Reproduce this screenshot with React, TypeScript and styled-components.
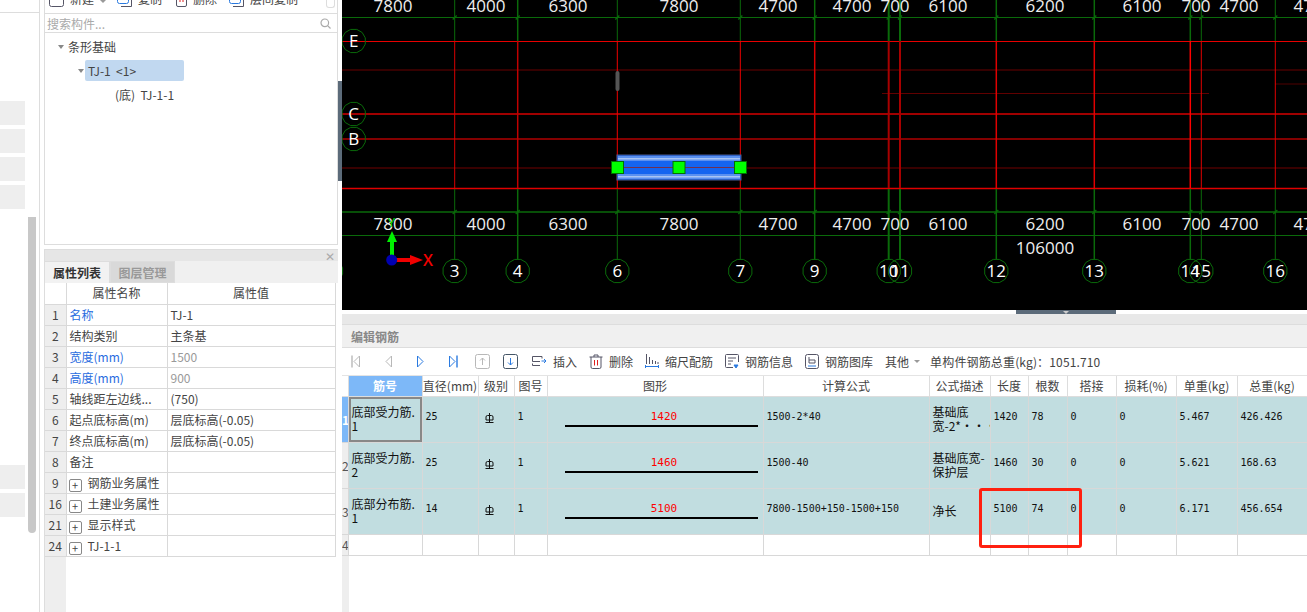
import styled, { createGlobalStyle } from "styled-components";

const GlobalStyle = createGlobalStyle`
  html, body {
    margin: 0;
    padding: 0;
    background: #fff;
  }
  * {
    box-sizing: border-box;
  }
`;

const Page = styled.div`
  display: flex;
  width: 1307px;
  height: 612px;
  overflow: hidden;
  background: #fff;
  color: #444;
  font-family: "Noto Sans CJK SC", "Noto Sans", sans-serif;
  font-size: 12px;
`;

/* ---------- left strip ---------- */

const Strip = styled.div`
  width: 40px;
  flex: none;
  border-right: 1px solid #ddd;
`;

const StripHead = styled.div`
  height: 13px;
  border-bottom: 1px solid #ddd;
`;

const StripBody = styled.div`
  display: flex;
  gap: 3px;
`;

const StripItems = styled.div`
  width: 25px;
  display: flex;
  flex-direction: column;
  gap: 4px;
  padding-top: 88px;
`;

const StripItem = styled.div<{ $gapBefore?: number }>`
  height: 24px;
  background: #eee;
  margin-top: ${(p) => p.$gapBefore ?? 0}px;
`;

const StripScroll = styled.div`
  width: 8px;
  height: 316px;
  margin-top: 204px;
  border-radius: 0 0 4px 4px;
  background: #c8c8c8;
`;

/* ---------- side panel ---------- */

const Side = styled.div`
  width: 302px;
  flex: none;
  display: flex;
  padding-left: 4px;
`;

const SideColumn = styled.div`
  width: 294px;
  display: flex;
  flex-direction: column;
  gap: 4px;
`;

const Rail = styled.div`
  width: 4px;
  height: 100px;
  margin-top: 81px;
  background: #5c6b7a;
`;

const TreeCard = styled.div`
  height: 245px;
  flex: none;
  border: 1px solid #ddd;
  border-top: none;
`;

const TreeToolbar = styled.div`
  height: 14px;
  display: flex;
  align-items: flex-end;
  overflow: hidden;
  border-bottom: 1px solid #ddd;
  padding: 0 2px 6px 4px;
`;

const TreeTool = styled.div<{ $ml?: number }>`
  display: flex;
  flex: none;
  align-items: flex-end;
  gap: 6px;
  height: 16px;
  line-height: 16px;
  margin-left: ${(p) => p.$ml ?? 0}px;
  color: #444;
`;

const ToolCaret = styled.span`
  margin-bottom: 4px;
  border-left: 3px solid transparent;
  border-right: 3px solid transparent;
  border-top: 3px solid #999;
`;

const MoreButton = styled.div`
  flex: none;
  width: 9px;
  height: 9px;
  margin: 0 0 -1px auto;
  border: 1px solid #ddd;
  border-top: none;
  border-radius: 0 0 3px 3px;
`;

const SearchRow = styled.div`
  height: 19px;
  display: flex;
  align-items: center;
  justify-content: space-between;
  padding: 0 6px 0 2px;
  border-bottom: 1px solid #ddd;
  color: #aaa;
`;

const Tree = styled.div`
  display: flex;
  flex-direction: column;
`;

const TreeRow = styled.div<{ $indent: number; $selected?: boolean }>`
  position: relative;
  display: flex;
  align-items: center;
  height: 21px;
  margin-top: 3px;
  margin-left: ${(p) => p.$indent}px;
  width: ${(p) => (p.$selected ? "99px" : "auto")};
  padding-left: 3px;
  border-radius: 2px;
  background: ${(p) => (p.$selected ? "#c1d8f0" : "transparent")};
  white-space: pre;
`;

const Caret = styled.span`
  position: absolute;
  left: -7px;
  top: 9px;
  border-left: 3.5px solid transparent;
  border-right: 3.5px solid transparent;
  border-top: 4px solid #888;
`;

const PropCard = styled.div`
  flex: 1;
  min-height: 0;
  display: flex;
  flex-direction: column;
  border-left: 1px solid #ddd;
`;

const PropHeader = styled.div`
  height: 12px;
  flex: none;
  display: flex;
  justify-content: flex-end;
  align-items: center;
  padding-right: 3px;
  background: #e6e6e6;
  border-top: 1px solid #ddd;
  color: #aaa;
`;

const TabBar = styled.div`
  height: 22px;
  flex: none;
  display: flex;
  background: #f0f0f0;
`;

const Tab = styled.div<{ $active?: boolean }>`
  width: 65px;
  display: flex;
  align-items: center;
  justify-content: center;
  border: 1px solid #ddd;
  border-left: ${(p) => (p.$active ? "none" : "1px solid #ddd")};
  border-bottom: ${(p) => (p.$active ? "none" : "1px solid #ddd")};
  background: ${(p) => (p.$active ? "#f2f2f2" : "#d9d9d9")};
  color: ${(p) => (p.$active ? "#333" : "#999")};
  font-weight: 700;
`;

const PropTable = styled.table`
  width: 290px;
  flex: none;
  table-layout: fixed;
  border-collapse: collapse;
`;

const PropCell = styled.td<{ $tone?: "blue" | "muted" }>`
  height: 21px;
  padding: 0 0 0 3px;
  border: 1px solid #d9d9d9;
  border-top: none;
  border-left: none;
  line-height: 20px;
  white-space: nowrap;
  overflow: hidden;
  color: ${(p) =>
    p.$tone === "blue" ? "#2a6de0" : p.$tone === "muted" ? "#999" : "#444"};
`;

const PropHeadCell = styled(PropCell)`
  padding: 0;
  font-weight: 400;
  text-align: center;
`;

const PropNum = styled(PropCell)`
  padding: 0;
  background: #eee;
  text-align: center;
`;

const PropCorner = styled(PropNum)`
  background: #fff;
`;

const PropGutter = styled.div`
  width: 21px;
  flex: 1;
  background: #eee;
`;

const Expand = styled.span`
  display: inline-flex;
  align-items: center;
  justify-content: center;
  width: 13px;
  height: 13px;
  margin: 0 6px 0 -1px;
  border: 1px solid #888;
  border-radius: 2px;
  font-size: 11px;
  line-height: 1;
  vertical-align: -2px;
`;

const SizedCol = styled.col<{ $w: number }>`
  width: ${(p) => p.$w}px;
`;

/* ---------- main ---------- */

const Main = styled.div`
  flex: 1;
  min-width: 0;
  display: flex;
  flex-direction: column;
`;

const Canvas = styled.svg`
  display: block;
  width: 965px;
  height: 310px;
  flex: none;
  background: #000;
`;

const SplitBar = styled.div`
  height: 4px;
  flex: none;
  display: flex;
  justify-content: flex-end;
  padding-right: 191px;
  background: #fff;
`;

const SplitHandle = styled.div`
  width: 100px;
  display: flex;
  justify-content: center;
  align-items: flex-end;
  background: #5c6b7a;
`;

const SplitArrow = styled.span`
  border-left: 3px solid transparent;
  border-right: 3px solid transparent;
  border-top: 3px solid #ccc;
`;

const PanelTitleGap = styled.div`
  height: 11px;
  flex: none;
  background: #e8e8e8;
  border-bottom: 1px solid #ddd;
`;

const PanelTitle = styled.div`
  height: 23px;
  flex: none;
  display: flex;
  align-items: center;
  padding-left: 9px;
  background: #f0f0f0;
  border-bottom: 1px solid #ddd;
  color: #888;
  font-weight: 700;
`;

const Toolbar = styled.div`
  height: 28px;
  flex: none;
  display: flex;
  align-items: center;
  border-bottom: 1px solid #e4e4e4;
  white-space: nowrap;
`;

const NavIcon = styled.div<{ $w: number }>`
  width: ${(p) => p.$w}px;
  flex: none;
  display: flex;
  justify-content: center;
  padding-right: 3px;
`;

const Action = styled.div<{ $ml: number }>`
  display: flex;
  flex: none;
  align-items: center;
  gap: 6px;
  margin-left: ${(p) => p.$ml}px;
`;

const MenuCaret = styled.span`
  margin-left: 5px;
  border-left: 3px solid transparent;
  border-right: 3px solid transparent;
  border-top: 3px solid #999;
`;

const Summary = styled.div`
  margin-left: 10px;
  flex: none;
  letter-spacing: 0.15px;
`;

const TableWrap = styled.div`
  position: relative;
  flex: 1;
  min-height: 0;
  display: flex;
  flex-direction: column;
`;

const Rebars = styled.table`
  width: 965px;
  flex: none;
  table-layout: fixed;
  border-collapse: collapse;
`;

const HeadCell = styled.th<{ $accent?: boolean }>`
  height: 20px;
  padding: 0;
  border: 1px solid #ddd;
  border-top: none;
  border-left: none;
  font-weight: ${(p) => (p.$accent ? 700 : 400)};
  color: ${(p) => (p.$accent ? "#fff" : "#444")};
  background: ${(p) => (p.$accent ? "#7db8f8" : "#fff")};
  white-space: nowrap;
  overflow: hidden;
`;

const Cell = styled.td<{ $filled: boolean; $focused?: boolean }>`
  height: 46px;
  padding: 0 0 0 3px;
  border: 1px solid #d8d8d8;
  border-top: none;
  border-left: none;
  background: ${(p) => (p.$filled ? "#c1dde0" : "#fff")};
  box-shadow: ${(p) => (p.$focused ? "inset 0 0 0 2px #888" : "none")};
  color: #111;
  line-height: 14px;
  overflow: hidden;
`;

const BlankCell = styled(Cell)`
  height: 21px;
`;

const RowNum = styled.td<{ $active?: boolean }>`
  padding: 0;
  border: 1px solid #d8d8d8;
  border-top: none;
  border-left: none;
  background: ${(p) => (p.$active ? "#7db8f8" : "#eee")};
  color: ${(p) => (p.$active ? "#fff" : "#555")};
  font-size: 12px;
  font-weight: ${(p) => (p.$active ? 700 : 400)};
  overflow: hidden;
  text-align: center;
`;

const Mono = styled.span`
  display: block;
  margin-bottom: 4px;
  font-family: "DejaVu Sans Mono", monospace;
  font-size: 10px;
  line-height: 12px;
  white-space: nowrap;
`;

const Shape = styled.div`
  display: flex;
  flex-direction: column;
  align-items: center;
  gap: 2px;
  padding-top: 2px;
  margin: 0 0 4px 10px;
`;

const ShapeLength = styled.span`
  padding-left: 5px;
  font-family: "DejaVu Sans Mono", monospace;
  font-size: 11px;
  line-height: 13px;
  color: #f00;
`;

const ShapeBar = styled.div`
  width: 193px;
  height: 2px;
  background: #000;
`;

const TableGutter = styled.div`
  width: 7px;
  flex: 1;
  background: #eee;
`;

const RedFrame = styled.div`
  position: absolute;
  left: 637px;
  top: 112px;
  width: 103px;
  height: 60px;
  border: 3px solid #ff2010;
  border-radius: 3px;
  pointer-events: none;
`;

/* ---------- drawing data ---------- */

interface Axis {
  x: number;
  label: string;
  stroke?: number;
  red?: string;
}

const AXES: Axis[] = [
  { x: 454.7, label: "3", red: "#d80000" },
  { x: 517.7, label: "4", stroke: 1.5, red: "#c00000" },
  { x: 617.3, label: "6", red: "#f00000" },
  { x: 740.3, label: "7", red: "#f00000" },
  { x: 814.7, label: "9", stroke: 1.5, red: "#d80000" },
  { x: 888.7, label: "10", stroke: 2, red: "#a80000" },
  { x: 900, label: "11", stroke: 2, red: "#a80000" },
  { x: 996.3, label: "12", stroke: 1.5, red: "#e00000" },
  { x: 1094.3, label: "13", stroke: 1.5, red: "#e00000" },
  { x: 1190.3, label: "14", stroke: 1.5, red: "#ff0000" },
  { x: 1201.3, label: "15", red: "#e00000" },
  { x: 1275.3, label: "16", red: "#e00000" },
];

const DIMENSIONS: [number, string][] = [
  [393, "7800"],
  [486, "4000"],
  [568, "6300"],
  [679, "7800"],
  [778, "4700"],
  [852, "4700"],
  [895, "700"],
  [948, "6100"],
  [1045, "6200"],
  [1142, "6100"],
  [1196, "700"],
  [1239, "4700"],
  [1313, "4700"],
];

const GRIDS: [number, string, number][] = [
  [41.5, "#e80000", 1],
  [70, "#6a0000", 1],
  [114, "#a00000", 2],
  [139, "#b00000", 1.5],
  [168, "#700000", 1],
  [188.5, "#e00000", 1.5],
];

const ROW_BUBBLES: [number, string][] = [
  [41, "E"],
  [114, "C"],
  [139, "B"],
];

const GREEN = "#0a6a0a";

function bubblePoints(cx: number, cy: number): string {
  const points: string[] = [];
  for (let i = 0; i < 12; i++) {
    const a = ((i + 0.5) * Math.PI) / 6;
    points.push(`${cx + 12 * Math.cos(a)},${cy + 12 * Math.sin(a)}`);
  }
  return points.join(" ");
}

function Bubble({ x, y, label }: { x: number; y: number; label: string }) {
  return (
    <g>
      <polygon points={bubblePoints(x, y)} fill="none" stroke={GREEN} />
      <text
        x={x}
        y={y + 6}
        fill="#fff"
        fontFamily="'Open Sans', sans-serif"
        fontSize="17"
        textAnchor="middle"
      >
        {label}
      </text>
    </g>
  );
}

function Drawing() {
  return (
    <Canvas viewBox="342 0 965 310">
      {GRIDS.map(([y, color, width]) => (
        <line key={y} x1={342} x2={1307} y1={y} y2={y} stroke={color} strokeWidth={width} />
      ))}
      <line x1={882} x2={1209} y1={93.5} y2={93.5} stroke="#600000" />
      <line x1={1275} x2={1307} y1={84} y2={84} stroke="#500000" />

      {AXES.map((a) => (
        <g key={a.label} strokeWidth={a.stroke ?? 1}>
          <line x1={a.x} x2={a.x} y1={0} y2={41} stroke={GREEN} />
          <line x1={a.x} x2={a.x} y1={41} y2={188} stroke={a.red} />
          <line x1={a.x} x2={a.x} y1={189} y2={259} stroke={GREEN} />
        </g>
      ))}

      <line x1={342} x2={1307} y1={17.5} y2={17.5} stroke={GREEN} strokeWidth={1.2} />
      <line x1={342} x2={1307} y1={212} y2={212} stroke={GREEN} strokeWidth={1.6} />
      <line x1={342} x2={1307} y1={235.5} y2={235.5} stroke={GREEN} />
      {AXES.map((a) => (
        <g key={`tick-${a.label}`} stroke={GREEN} strokeWidth={1.2}>
          <line x1={a.x - 2} x2={a.x + 2} y1={19.5} y2={15.5} />
          <line x1={a.x - 2} x2={a.x + 2} y1={214} y2={210} />
        </g>
      ))}

      {DIMENSIONS.map(([x, label]) => (
        <g
          key={`${x}-${label}`}
          fill="#eee"
          fontFamily="'Open Sans', sans-serif"
          fontSize="17"
          textAnchor="middle"
        >
          <text x={x} y={12}>{label}</text>
          <text x={x} y={230}>{label}</text>
        </g>
      ))}
      <text
        x={1045}
        y={254}
        fill="#eee"
        fontFamily="'Open Sans', sans-serif"
        fontSize="17"
        textAnchor="middle"
      >
        106000
      </text>

      {AXES.map((a) => (
        <Bubble key={`b-${a.label}`} x={a.x} y={271} label={a.label} />
      ))}
      <polygon points={bubblePoints(331, 271)} fill="none" stroke={GREEN} />
      {ROW_BUBBLES.map(([y, label]) => (
        <Bubble key={label} x={353.7} y={y} label={label} />
      ))}

      <rect x={615.5} y={71} width={4} height={20} rx={2} fill="#555" />

      <rect x={617} y={155} width={124} height={25} fill="#1464f0" stroke="#4a5a90" />
      <rect x={618} y={156} width={122} height={5} fill="#5a90f0" />
      <rect x={618} y={158} width={122} height={1.5} fill="#a8c4f4" />
      <rect x={618} y={174} width={122} height={5} fill="#5a90f0" />
      <rect x={618} y={176} width={122} height={1.5} fill="#a8c4f4" />
      <line x1={617} x2={741} y1={167.5} y2={167.5} stroke="#703050" />
      {[617.5, 679, 740.5].map((x) => (
        <rect
          key={x}
          x={x - 6}
          y={161.5}
          width={12}
          height={12}
          fill="#00ff00"
          stroke="#007000"
        />
      ))}

      <rect x={390} y={240} width={4} height={20} fill="#00f000" />
      <polygon points="392,231 397,242 387,242" fill="#00f000" />
      <rect x={392} y={258} width={20} height={4} fill="#f00000" />
      <polygon points="423,260 410,255 410,265" fill="#f00000" />
      <circle cx={391.7} cy={260} r={5.5} fill="#0000b0" />
      <text
        x={428}
        y={266}
        fill="#f00000"
        fontFamily="'Open Sans', sans-serif"
        fontSize="16"
        fontWeight="600"
        textAnchor="middle"
      >
        X
      </text>
      <text
        x={391.5}
        y={227}
        fill="#00e000"
        fontFamily="'Open Sans', sans-serif"
        fontSize="13"
        textAnchor="middle"
      >
        Y
      </text>
    </Canvas>
  );
}

/* ---------- icons ---------- */

const GRAY = "#b8b8b8";
const BLUE = "#2a7ae0";

function Nav({ back, end, color }: { back?: boolean; end?: boolean; color: string }) {
  return (
    <svg width="11" height="13" viewBox="0 0 11 13" fill="none" stroke={color}>
      <g transform={back ? "translate(11 0) scale(-1 1)" : undefined}>
        <path d="M2.5 1 L8 6.5 L2.5 12 Z" />
        {end && <path d="M10 0.5 V12.5" strokeWidth="1.4" />}
      </g>
    </svg>
  );
}

function MoveBox({ down, color }: { down?: boolean; color: string }) {
  return (
    <svg width="15" height="15" viewBox="0 0 15 15" fill="none" stroke={color}>
      <rect x="0.5" y="0.5" width="14" height="14" rx="2" stroke={down ? "#456" : color} />
      <path d={down ? "M7.5 4 V11 M5 8.5 L7.5 11 L10 8.5" : "M7.5 11 V4 M5 6.5 L7.5 4 L10 6.5"} />
    </svg>
  );
}

function InsertIcon() {
  return (
    <svg width="15" height="14" viewBox="0 0 15 14" fill="none" stroke="#556">
      <path d="M10 3.5 V1.5 H0.5 V6.5 H8" />
      <path d="M0.5 8.5 V10.5 H8" />
      <path d="M9.5 6 H14 M12 4 L14 6 L12 8" stroke={BLUE} />
    </svg>
  );
}

function TrashIcon() {
  return (
    <svg width="14" height="15" viewBox="0 0 14 15" fill="none" stroke="#556">
      <path d="M0.5 3 H13.5 M5 3 V1 H9 V3" />
      <path d="M2 3 V13 Q2 14.5 3.5 14.5 H10.5 Q12 14.5 12 13 V3" />
      <path d="M5.5 6 V11.5 M8.5 6 V11.5" stroke="#e02020" />
    </svg>
  );
}

function ScaleIcon() {
  return (
    <svg width="14" height="15" viewBox="0 0 14 15" fill="none" stroke="#556">
      <path d="M1.5 0 V10 M4.5 3 V10 M7.5 6 V10 M10.5 7 V10 M13 8 V10" />
      <path d="M0.5 11 V14 M13.5 11 V14 M0.5 12.5 H13.5" stroke={BLUE} />
    </svg>
  );
}

function InfoIcon() {
  return (
    <svg width="14" height="15" viewBox="0 0 14 15" fill="none" stroke="#556">
      <path d="M8 13.5 H1.5 Q0.5 13.5 0.5 12.5 V1.5 Q0.5 0.5 1.5 0.5 H12.5 Q13.5 0.5 13.5 1.5 V8" />
      <path d="M3 4 H11 M3 7 H8 M3 10 H6" />
      <path d="M9 11 H13 L11 14 Z" fill={BLUE} stroke={BLUE} />
    </svg>
  );
}

function LibraryIcon() {
  return (
    <svg width="14" height="15" viewBox="0 0 14 15" fill="none" stroke="#556">
      <rect x="0.5" y="0.5" width="13" height="14" rx="2" />
      <path d="M4 3 V9 H10 V6 H4" />
      <path d="M3 12 H11" stroke={BLUE} />
    </svg>
  );
}

function CheckboxIcon() {
  return (
    <svg width="15" height="16" viewBox="0 0 15 16" fill="none" stroke="#556">
      <rect x="0.5" y="0.5" width="14" height="15" rx="2" />
    </svg>
  );
}

function CopyIcon() {
  return (
    <svg width="15" height="16" viewBox="0 0 15 16" fill="none" stroke={BLUE}>
      <rect x="0.5" y="0.5" width="11" height="12" rx="2" />
      <path d="M4 15.5 H14.5 V6" stroke="#556" />
    </svg>
  );
}

function DeleteIcon() {
  return (
    <svg width="11" height="16" viewBox="0 0 11 16" fill="none" stroke="#556">
      <path d="M0.5 0 V14 Q0.5 15.5 2 15.5 H9 Q10.5 15.5 10.5 14 V0" />
      <path d="M4 4 V11 M7 4 V11" stroke="#e02020" />
    </svg>
  );
}

function SearchIcon() {
  return (
    <svg width="11" height="11" viewBox="0 0 11 11" fill="none" stroke="#aaa" strokeWidth="1.2">
      <circle cx="4.8" cy="4.8" r="3.8" />
      <path d="M7.6 7.6 L10.5 10.5" />
    </svg>
  );
}

const GradeIcon = styled.svg`
  display: block;
  margin: 0 0 2px 3px;
`;

function GradeMark() {
  return (
    <GradeIcon width="9" height="10" viewBox="0 0 9 10" fill="none" stroke="#111">
      <path d="M1 7 V4 Q1 2.5 2.5 2.5 H6.5 Q8 2.5 8 4 V7 H1 M4.5 0 V9 M0.5 9.5 H8.5" />
    </GradeIcon>
  );
}

/* ---------- table data ---------- */

const PROPS: { num: number; name: string; value: string; nameTone?: "blue"; valueTone?: "muted"; group?: boolean }[] = [
  { num: 1, name: "名称", value: "TJ-1", nameTone: "blue" },
  { num: 2, name: "结构类别", value: "主条基" },
  { num: 3, name: "宽度(mm)", value: "1500", nameTone: "blue", valueTone: "muted" },
  { num: 4, name: "高度(mm)", value: "900", nameTone: "blue", valueTone: "muted" },
  { num: 5, name: "轴线距左边线...", value: "(750)" },
  { num: 6, name: "起点底标高(m)", value: "层底标高(-0.05)" },
  { num: 7, name: "终点底标高(m)", value: "层底标高(-0.05)" },
  { num: 8, name: "备注", value: "" },
  { num: 9, name: "钢筋业务属性", value: "", group: true },
  { num: 16, name: "土建业务属性", value: "", group: true },
  { num: 21, name: "显示样式", value: "", group: true },
  { num: 24, name: "TJ-1-1", value: "", group: true },
];

const COLUMNS: [string, number][] = [
  ["", 6],
  ["筋号", 74],
  ["直径(mm)", 56],
  ["级别", 36],
  ["图号", 33],
  ["图形", 216],
  ["计算公式", 166],
  ["公式描述", 61],
  ["长度", 38],
  ["根数", 39],
  ["搭接", 49],
  ["损耗(%)", 60],
  ["单重(kg)", 61],
  ["总重(kg)", 70],
];

const REBARS = [
  {
    name: ["底部受力筋.", "1"],
    dia: "25",
    length: "1420",
    formula: "1500-2*40",
    desc: ["基础底", "宽-2*···"],
    count: "78",
    unit: "5.467",
    total: "426.426",
  },
  {
    name: ["底部受力筋.", "2"],
    dia: "25",
    length: "1460",
    formula: "1500-40",
    desc: ["基础底宽-", "保护层"],
    count: "30",
    unit: "5.621",
    total: "168.63",
  },
  {
    name: ["底部分布筋.", "1"],
    dia: "14",
    length: "5100",
    formula: "7800-1500+150-1500+150",
    desc: ["净长"],
    count: "74",
    unit: "6.171",
    total: "456.654",
  },
];

function LeftStrip() {
  return (
    <Strip>
      <StripHead />
      <StripBody>
        <StripItems>
          <StripItem />
          <StripItem />
          <StripItem />
          <StripItem />
          <StripItem $gapBefore={252} />
          <StripItem />
        </StripItems>
        <StripScroll />
      </StripBody>
    </Strip>
  );
}

function ComponentTree() {
  return (
    <TreeCard>
      <TreeToolbar>
        <TreeTool>
          <CheckboxIcon />
          新建
          <ToolCaret />
        </TreeTool>
        <TreeTool $ml={11}>
          <CopyIcon />
          复制
        </TreeTool>
        <TreeTool $ml={14}>
          <DeleteIcon />
          删除
        </TreeTool>
        <TreeTool $ml={12}>
          <CopyIcon />
          层间复制
        </TreeTool>
        <MoreButton />
      </TreeToolbar>
      <SearchRow>
        搜索构件...
        <SearchIcon />
      </SearchRow>
      <Tree>
        <TreeRow $indent={20}>
          <Caret />
          条形基础
        </TreeRow>
        <TreeRow $indent={40} $selected>
          <Caret />
          {"TJ-1  <1>"}
        </TreeRow>
        <TreeRow $indent={67}>{"(底)  TJ-1-1"}</TreeRow>
      </Tree>
    </TreeCard>
  );
}

function PropertyPanel() {
  return (
    <PropCard>
      <PropHeader>✕</PropHeader>
      <TabBar>
        <Tab $active>属性列表</Tab>
        <Tab>图层管理</Tab>
      </TabBar>
      <PropTable>
        <colgroup>
          <SizedCol $w={21} />
          <SizedCol $w={101} />
          <SizedCol $w={168} />
        </colgroup>
        <thead>
          <tr>
            <PropCorner as="th" />
            <PropHeadCell as="th">属性名称</PropHeadCell>
            <PropHeadCell as="th">属性值</PropHeadCell>
          </tr>
        </thead>
        <tbody>
          {PROPS.map((p) => (
            <tr key={p.num}>
              <PropNum>{p.num}</PropNum>
              <PropCell $tone={p.nameTone}>
                {p.group && <Expand>+</Expand>}
                {p.name}
              </PropCell>
              <PropCell $tone={p.valueTone}>{p.value}</PropCell>
            </tr>
          ))}
        </tbody>
      </PropTable>
      <PropGutter />
    </PropCard>
  );
}

function RebarToolbar() {
  return (
    <Toolbar>
      <NavIcon $w={32}><Nav back end color={GRAY} /></NavIcon>
      <NavIcon $w={32}><Nav back color={GRAY} /></NavIcon>
      <NavIcon $w={32}><Nav color={BLUE} /></NavIcon>
      <NavIcon $w={32}><Nav end color={BLUE} /></NavIcon>
      <NavIcon $w={28}><MoveBox color={GRAY} /></NavIcon>
      <NavIcon $w={28}><MoveBox down color={BLUE} /></NavIcon>
      <Action $ml={6}><InsertIcon />插入</Action>
      <Action $ml={12}><TrashIcon />删除</Action>
      <Action $ml={12}><ScaleIcon />缩尺配筋</Action>
      <Action $ml={12}><InfoIcon />钢筋信息</Action>
      <Action $ml={12}><LibraryIcon />钢筋图库</Action>
      <Action $ml={12}>其他</Action>
      <MenuCaret />
      <Summary>单构件钢筋总重(kg)：1051.710</Summary>
    </Toolbar>
  );
}

function RebarTable() {
  return (
    <TableWrap>
      <Rebars>
        <colgroup>
          {COLUMNS.map(([, w], i) => (
            <SizedCol key={i} $w={w} />
          ))}
        </colgroup>
        <thead>
          <tr>
            {COLUMNS.map(([title], i) => (
              <HeadCell key={i} $accent={i === 1}>{title}</HeadCell>
            ))}
          </tr>
        </thead>
        <tbody>
          {REBARS.map((r, i) => (
            <tr key={i}>
              <RowNum $active={i === 0}>{i + 1}</RowNum>
              <Cell $filled $focused={i === 0}>
                {r.name[0]}
                <br />
                {r.name[1]}
              </Cell>
              <Cell $filled><Mono>{r.dia}</Mono></Cell>
              <Cell $filled><GradeMark /></Cell>
              <Cell $filled><Mono>1</Mono></Cell>
              <Cell $filled>
                <Shape>
                  <ShapeLength>{r.length}</ShapeLength>
                  <ShapeBar />
                </Shape>
              </Cell>
              <Cell $filled><Mono>{r.formula}</Mono></Cell>
              <Cell $filled>
                {r.desc[0]}
                {r.desc[1] && <br />}
                {r.desc[1]}
              </Cell>
              <Cell $filled><Mono>{r.length}</Mono></Cell>
              <Cell $filled><Mono>{r.count}</Mono></Cell>
              <Cell $filled><Mono>0</Mono></Cell>
              <Cell $filled><Mono>0</Mono></Cell>
              <Cell $filled><Mono>{r.unit}</Mono></Cell>
              <Cell $filled><Mono>{r.total}</Mono></Cell>
            </tr>
          ))}
          <tr>
            <RowNum>4</RowNum>
            {COLUMNS.slice(1).map(([title]) => (
              <BlankCell key={title} $filled={false} />
            ))}
          </tr>
        </tbody>
      </Rebars>
      <TableGutter />
      <RedFrame />
    </TableWrap>
  );
}

export default function App() {
  return (
    <Page>
      <GlobalStyle />
      <LeftStrip />
      <Side>
        <SideColumn>
          <ComponentTree />
          <PropertyPanel />
        </SideColumn>
        <Rail />
      </Side>
      <Main>
        <Drawing />
        <SplitBar>
          <SplitHandle>
            <SplitArrow />
          </SplitHandle>
        </SplitBar>
        <PanelTitleGap />
        <PanelTitle>编辑钢筋</PanelTitle>
        <RebarToolbar />
        <RebarTable />
      </Main>
    </Page>
  );
}
